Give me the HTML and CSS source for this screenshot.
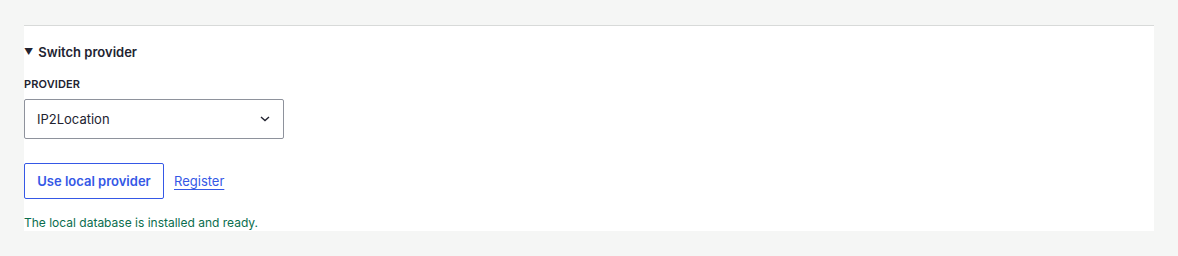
FILE: index.html
```html
<!DOCTYPE html>
<html>
<head>
<meta charset="utf-8">
<link rel="stylesheet" href="styles.css">
</head>
<body>
<div class="page">
  <section class="panel">
    <div class="summary"><span class="tri">▼</span>Switch provider</div>
    <label class="label">PROVIDER</label>
    <div class="select">
      <span>IP2Location</span>
      <svg class="chev" width="10" height="6" viewBox="0 0 10 6"><path d="M1 1l4 3.5L9 1" fill="none" stroke="#222330" stroke-width="1.4"/></svg>
    </div>
    <div class="actions">
      <button class="btn">Use local provider</button>
      <a class="link" href="#">Register</a>
    </div>
    <p class="status">The local database is installed and ready.</p>
  </section>
</div>
</body>
</html>
```
FILE: styles.css
```css
html, body { margin: 0; padding: 0; }
body {
  background: #f5f6f5;
  font-family: Inter, "Noto Sans", sans-serif;
  color: #222330;
  width: 1178px;
  height: 256px;
}
.page { padding: 25px 24px 0 24px; }
.panel {
  background: #fff;
  border-top: 1px solid #d8dad9;
  height: 205px;
  display: flex;
  flex-direction: column;
  align-items: flex-start;
}
.summary {
  margin-top: 17px;
  font-size: 13px;
  font-weight: 600;
  line-height: 18px;
  display: flex;
  align-items: center;
}
.tri { font-size: 9px; margin-right: 5px; }
.label {
  margin-top: 15px;
  font-size: 11px;
  font-weight: 600;
  line-height: 16px;
  letter-spacing: 0.01em;
}
.select {
  margin-top: 7px;
  box-sizing: border-box;
  width: 260px;
  height: 40px;
  border: 1px solid #8e929c;
  border-radius: 2px;
  display: flex;
  align-items: center;
  justify-content: space-between;
  padding: 0 13px 0 12px;
  font-size: 13px;
}
.actions {
  margin-top: 24px;
  display: flex;
  align-items: center;
  gap: 10px;
}
.btn {
  box-sizing: border-box;
  height: 36px;
  width: 140px;
  border: 1px solid #3558e6;
  border-radius: 2px;
  background: #fff;
  color: #3558e6;
  font-family: inherit;
  font-size: 13px;
  font-weight: 600;
  padding: 0 12px;
}
.link {
  color: #3558e6;
  font-size: 13px;
  text-decoration: underline;
  text-underline-offset: 3px;
}
.status {
  margin: 16px 0 0 0;
  font-size: 12px;
  line-height: 16px;
  color: #0a6d4e;
}
```
